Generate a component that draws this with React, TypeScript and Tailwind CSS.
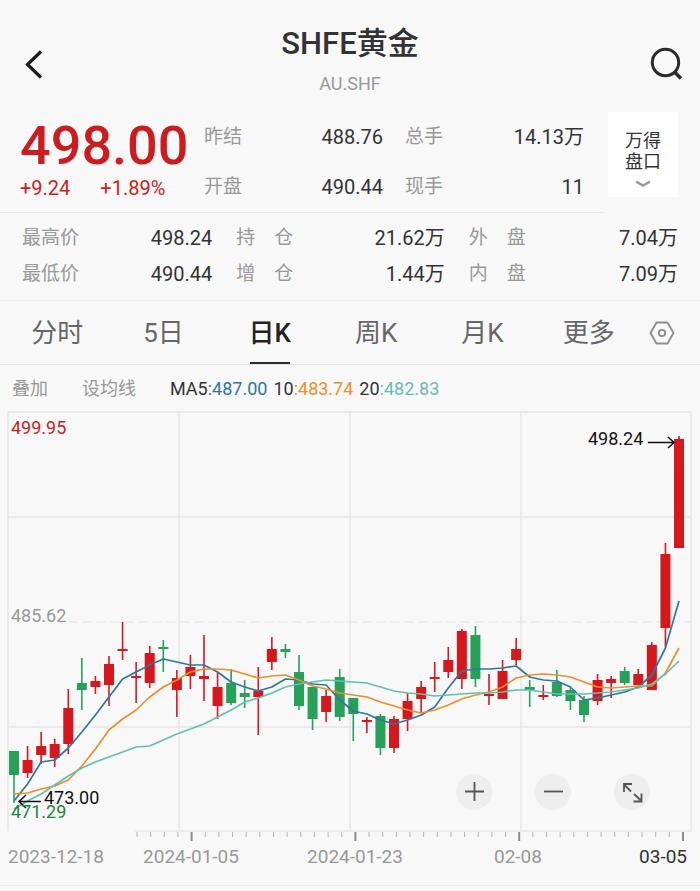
import { useState } from 'react';
import clsx from 'clsx';

const summary = [
  { label: '昨结', value: '488.76' },
  { label: '总手', value: '14.13万' },
  { label: '开盘', value: '490.44' },
  { label: '现手', value: '11' },
];

const details = [
  { label: '最高价', value: '498.24' },
  { label: '持\u3000仓', value: '21.62万' },
  { label: '外\u3000盘', value: '7.04万' },
  { label: '最低价', value: '490.44' },
  { label: '增\u3000仓', value: '1.44万' },
  { label: '内\u3000盘', value: '7.09万' },
];

const tabs = ['分时', '5日', '日K', '周K', '月K', '更多'];

type Candle = [dir: 'up' | 'down', top: number, bottom: number, high: number, low: number];

const candles: Candle[] = [
  ['down', 751, 775, 751, 803],
  ['up', 760, 773, 746, 778],
  ['up', 746, 755, 732, 764],
  ['up', 744, 758, 739, 767],
  ['up', 708, 744, 689, 754],
  ['down', 683, 690, 658, 710],
  ['up', 681, 687, 676, 694],
  ['up', 664, 685, 656, 706],
  ['up', 649, 651, 622, 660],
  ['up', 676, 678, 662, 703],
  ['up', 653, 683, 646, 688],
  ['down', 647, 649, 640, 672],
  ['up', 678, 690, 670, 717],
  ['up', 667, 676, 655, 689],
  ['up', 676, 679, 635, 701],
  ['up', 687, 706, 672, 719],
  ['down', 683, 703, 669, 705],
  ['down', 693, 697, 680, 708],
  ['up', 691, 697, 667, 735],
  ['up', 649, 662, 637, 670],
  ['down', 649, 652, 644, 658],
  ['down', 672, 706, 655, 710],
  ['down', 687, 719, 687, 730],
  ['up', 696, 712, 690, 722],
  ['down', 677, 717, 669, 721],
  ['down', 698, 714, 698, 741],
  ['up', 720, 722, 717, 733],
  ['down', 716, 748, 714, 755],
  ['up', 719, 748, 716, 753],
  ['up', 701, 719, 693, 731],
  ['up', 687, 699, 681, 713],
  ['up', 677, 679, 662, 692],
  ['up', 660, 672, 647, 678],
  ['up', 631, 679, 629, 689],
  ['down', 635, 679, 626, 687],
  ['up', 694, 696, 674, 705],
  ['up', 671, 699, 660, 699],
  ['up', 649, 660, 638, 665],
  ['down', 687, 690, 680, 707],
  ['up', 695, 697, 685, 700],
  ['down', 682, 696, 670, 697],
  ['down', 690, 701, 688, 710],
  ['down', 700, 715, 696, 722],
  ['up', 680, 701, 674, 705],
  ['up', 679, 683, 676, 698],
  ['down', 671, 683, 667, 685],
  ['up', 674, 685, 669, 685],
  ['up', 645, 690, 642, 690],
  ['up', 554, 628, 543, 647],
  ['up', 439, 548, 436, 548],
];

const averages = [
  {
    name: 'MA5',
    color: '#2f759f',
    ys: [
      801, 784, 762, 760, 748, 732, 715, 697, 679, 672, 665, 659, 662, 665, 665, 672, 682, 687, 691, 687, 679, 680, 684,
      685, 700, 711, 714, 720, 724, 720, 715, 707, 688, 671, 669, 669, 668, 666, 677, 680, 681, 687, 700, 698, 695, 692,
      687, 675, 648, 601,
    ],
  },
  {
    name: 'MA10',
    color: '#ea8f2c',
    ys: [
      794, 793, 789, 786, 780, 766, 749, 730, 719, 710, 697, 687, 680, 672, 669, 669, 670, 674, 678, 676, 675, 680, 686,
      689, 693, 695, 697, 702, 706, 710, 713, 710, 705, 699, 695, 692, 687, 678, 675, 674, 675, 677, 682, 687, 688, 687,
      686, 686, 673, 648,
    ],
  },
  {
    name: 'MA20',
    color: '#66bdb2',
    ys: [
      809, 801, 794, 785, 776, 768, 762, 757, 752, 747, 746, 740, 734, 729, 724, 717, 710, 702, 698, 693, 687, 684, 682,
      680, 681, 682, 683, 687, 691, 693, 694, 696, 695, 694, 693, 693, 692, 690, 690, 692, 694, 694, 694, 693, 692, 690,
      688, 684, 674, 661,
    ],
  },
];

const UP = '#d5181e';
const DOWN = '#27a15a';
const GRID = '#e6e6e6';

const xAt = (i: number) => 14 + (i * 665) / 49;

function Chart() {
  return (
    <svg viewBox="0 411 700 474" className="block w-full" role="img" aria-label="日K">
      <g stroke={GRID} strokeWidth="1.5" fill="none">
        <path d="M8 412H691M8 517H691M8 727H691M135 831H691" />
        <path d="M8 412V831M179 412V831M350 412V831M521 412V831M691 412V831" />
        <path d="M68 622H691" strokeDasharray="10 4" strokeWidth="1" />
      </g>

      {Array.from({ length: 41 }, (_, i) => {
        const major = i % 12 === 4;
        const x = 137 + i * 13.65;
        return (
          <path
            key={i}
            d={`M${x} 832V${major ? 841 : 837}`}
            stroke={major ? '#8c8c8c' : '#b5b5b5'}
            strokeWidth={major ? 2 : 1}
          />
        );
      })}

      {candles.map(([dir, top, bottom, high, low], i) => {
        const color = dir === 'up' ? UP : DOWN;
        return (
          <g key={i}>
            <path d={`M${xAt(i)} ${high}V${low}`} stroke={color} strokeWidth="1.6" />
            <rect x={xAt(i) - 5} y={top} width="10" height={bottom - top} fill={color} />
          </g>
        );
      })}

      {averages.map(({ name, color, ys }) => (
        <polyline
          key={name}
          points={ys.map((y, i) => `${xAt(i)},${y}`).join(' ')}
          fill="none"
          stroke={color}
          strokeWidth="1.7"
          strokeLinejoin="round"
        />
      ))}

      <g stroke="#111" strokeWidth="1.5" fill="none">
        <path d="M648 442.5H674M668 437L674 442.5L668 448" />
        <path d="M41 801.5H19M26 795L19 801.5L26 808" />
      </g>

      <g className="text-[18px]">
        <text x="11" y="434" fill="#cb1d20">499.95</text>
        <text x="11" y="622" fill="#999">485.62</text>
        <text x="11" y="818" fill="#188543">471.29</text>
        <text x="588" y="445" fill="#111">498.24</text>
        <text x="44" y="804" fill="#111">473.00</text>
      </g>

      <g className="text-[19px]" fill="#999">
        <text x="8" y="863">2023-12-18</text>
        <text x="191" y="863" textAnchor="middle">2024-01-05</text>
        <text x="355" y="863" textAnchor="middle">2024-01-23</text>
        <text x="518" y="863" textAnchor="middle">02-08</text>
        <text x="687" y="863" textAnchor="end" fill="#333">03-05</text>
      </g>
    </svg>
  );
}

const zoomControls = [
  { label: '放大', d: 'M9 17.5H28M18.5 8V27' },
  { label: '缩小', d: 'M9 17.5H28' },
  { label: '全屏', d: 'M17 17.5L10 10.5M10 18V10H18M20 20L27.5 27M27.5 19.5V27.5H19.5' },
];

export default function App() {
  const [active, setActive] = useState('日K');

  return (
    <main className="min-h-screen bg-[#f8f8f8] font-[Roboto,'Noto_Sans_CJK_SC',sans-serif] text-[#333]">
      <header className="flex items-center justify-between px-4 pt-6 pb-4">
        <button type="button" aria-label="返回" className="mt-2 flex h-9 w-9 items-center justify-center">
          <svg viewBox="0 0 36 36" className="h-9 w-9" fill="none" stroke="#1c1c1c" strokeWidth="3.2">
            <path d="M25 5.5L11.5 18.5L25 31.5" />
          </svg>
        </button>
        <div className="text-center">
          <h1 className="text-[31px] leading-10 font-medium">SHFE黄金</h1>
          <p className="mt-2 text-lg leading-6 text-[#999]">AU.SHF</p>
        </div>
        <button type="button" aria-label="搜索" className="mt-2 flex h-9 w-9 items-center justify-center">
          <svg viewBox="0 0 36 36" className="h-9 w-9" fill="none" stroke="#2b2b2b" strokeWidth="3">
            <circle cx="17.5" cy="16.5" r="13.2" />
            <path d="M26.5 26L33 32.5" strokeWidth="3.5" />
          </svg>
        </button>
      </header>

      <section className="flex pr-[22px]">
        <div className="flex flex-1 border-b border-[#e9e9e9] pr-5 pl-5">
          <div className="w-[184px] text-[#cb1d20]">
            <p className="text-[54px] leading-[68px] font-medium">498.00</p>
            <p className="flex gap-[30px] text-xl leading-4">
              <span>+9.24</span>
              <span>+1.89%</span>
            </p>
          </div>
          <dl className="grid flex-1 grid-cols-2 gap-x-[22px] text-xl leading-[50px]">
            {summary.map(({ label, value }) => (
              <div key={label} className="flex justify-between">
                <dt className="text-[19px] text-[#999]">{label}</dt>
                <dd>{value}</dd>
              </div>
            ))}
          </dl>
        </div>
        <button
          type="button"
          className="ml-1 flex h-[85px] w-[70px] flex-col items-center justify-center bg-white pt-2 text-lg leading-[21px]"
        >
          <span>万得</span>
          <span>盘口</span>
          <svg viewBox="0 0 16 8" className="mt-2 h-2 w-4" fill="none" stroke="#999" strokeWidth="2.4">
            <path d="M1 1.5L8 5.5L15 1.5" />
          </svg>
        </button>
      </section>

      <dl className="grid grid-cols-[190fr_208fr_209fr] gap-x-6 border-b border-[#ececec] px-[22px] pt-[7px] pb-2 text-xl leading-9">
        {details.map(({ label, value }) => (
          <div key={label} className="flex justify-between">
            <dt className="text-[19px] text-[#999]">{label}</dt>
            <dd>{value}</dd>
          </div>
        ))}
      </dl>

      <nav className="flex border-b border-[#e2e2e2] pr-[18px] pl-1">
        {tabs.map((tab) => (
          <button
            key={tab}
            type="button"
            onClick={() => setActive(tab)}
            className="flex flex-1 flex-col items-center pt-1 text-[26px] leading-[57px]"
          >
            <span className={active === tab ? 'font-medium text-[#222]' : 'text-[#666]'}>{tab}</span>
            <span className={clsx('h-[2px] w-10', active === tab && 'bg-[#2b2b2b]')} />
          </button>
        ))}
        <button type="button" aria-label="设置" className="flex w-10 items-center justify-center">
          <svg viewBox="0 0 28 28" className="h-7 w-7" fill="none" stroke="#8c8c8c" strokeWidth="1.8">
            <path d="M8.5 3.5H19.5L25.5 14L19.5 24.5H8.5L2.5 14Z" strokeLinejoin="round" />
            <circle cx="14" cy="14" r="3.2" />
          </svg>
        </button>
      </nav>

      <div className="flex h-[46px] items-center px-3 pt-[2px] text-lg">
        <button type="button" className="text-[#999]">叠加</button>
        <button type="button" className="ml-[34px] text-[#999]">设均线</button>
        <p className="ml-[34px] flex gap-[6px]">
          <span>MA5<span className="text-[#2f759f]">:487.00</span></span>
          <span>10<span className="text-[#ea8f2c]">:483.74</span></span>
          <span>20<span className="text-[#66bdb2]">:482.83</span></span>
        </p>
      </div>

      <section className="relative border-b border-[#ececec]">
        <Chart />
        <div className="absolute right-[50px] bottom-[75px] flex gap-[43px]">
          {zoomControls.map(({ label, d }) => (
            <button key={label} type="button" aria-label={label} className="h-9 w-9 rounded-full bg-[#eeeeee]">
              <svg viewBox="0 0 36 36" className="h-9 w-9" fill="none" stroke="#555" strokeWidth="1.8">
                <path d={d} />
              </svg>
            </button>
          ))}
        </div>
      </section>
    </main>
  );
}
